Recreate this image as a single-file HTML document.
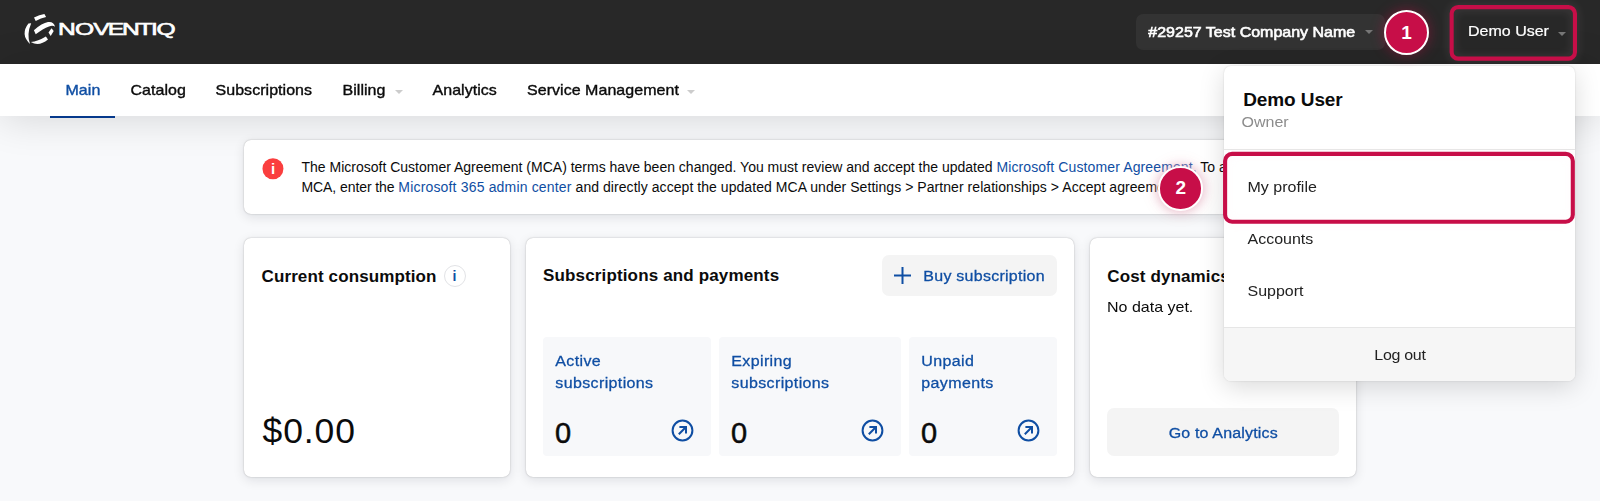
<!DOCTYPE html>
<html lang="en">
<head>
<meta charset="utf-8">
<title>Noventiq</title>
<style>
*{box-sizing:border-box;margin:0;padding:0}
html,body{width:1600px;height:501px;overflow:hidden;background:#f8f9fb;font-family:"Liberation Sans",sans-serif;color:#0b0b0b}
.abs{position:absolute;white-space:nowrap}
#hdr{position:absolute;left:0;top:0;width:1600px;height:64px;background:#282828}
#nav{position:absolute;left:0;top:64px;width:1600px;height:52px;background:#fff;box-shadow:0 3px 40px rgba(0,0,0,.14)}
.px{transform:scaleY(.95);transform-origin:0 77.7%}
.pl{transform:scaleY(.95);transform-origin:0 75%}
.pm{transform:scaleY(.93);transform-origin:0 75%}
.nv{transform:scaleY(.95);transform-origin:0 77.7%;position:absolute;top:80.1px;font-size:16px;line-height:20px;letter-spacing:.04px;color:#0b0b0b;white-space:nowrap;-webkit-text-stroke:.4px currentColor}
.caret{position:absolute;width:0;height:0;border-left:4px solid transparent;border-right:4px solid transparent;border-top:4px solid #ccc}
.card{position:absolute;background:#fff;border-radius:7px;box-shadow:0 0 1.5px rgba(0,0,0,.30),0 3px 12px rgba(10,20,40,.11)}
.h{position:absolute;font-weight:bold;font-size:17px;line-height:22px;white-space:nowrap;color:#0b0b0b}
.tile{position:absolute;top:337px;height:119px;background:#f7f8fa;border-radius:4px}
.tl{transform:scaleY(.93);transform-origin:0 0;position:absolute;left:12.3px;top:12.6px;font-size:16px;line-height:23.66px;letter-spacing:.37px;color:#0f4ea3;-webkit-text-stroke:.3px currentColor}
.tn{position:absolute;left:12px;top:79.2px;font-size:29px;line-height:34px;color:#0b0b0b;-webkit-text-stroke:.5px currentColor}
.ar{position:absolute;top:82px;width:23px;height:23px}
.blue{color:#0f4ea3}
</style>
</head>
<body>
<div id="hdr">
  <svg class="abs" style="left:0;top:0" width="64" height="64" viewBox="0 0 64 64" fill="#fff">
    <path d="M34.0 17.5 Q39.5 14.4 44.4 13.9 L46.1 17.0 Q41 17.8 35.7 21.0 Z"/>
    <path d="M28.4 23.5 Q20.0 34.4 30 43.9 Q26.4 34.4 31.2 23.2 Z"/>
    <path d="M33.9 30.2 Q42 23.2 48 22.1 Q53.7 21.3 55.1 26.8 Q53 24.9 49 26.4 Q43 28.6 35.7 34.3 Z"/>
    <path d="M51.5 28.2 L53.7 31.1 L50.7 36 L48.5 32.5 Z"/>
    <path d="M30.8 42 Q38 41.3 45.9 36.5 L48 39.5 Q39 46.8 30.8 42 Z"/>
  </svg>
  <svg class="abs" style="left:0;top:0" width="200" height="64"><text id="logo" transform="scale(1.45,1)" x="46.07 58.38 70.03 79.93 90.28 100.21 106.45 114.59" y="35.3" text-anchor="middle" font-family="Liberation Sans, sans-serif" font-size="17" fill="#fff" stroke="#fff" stroke-width=".6">NOVENTIQ</text></svg>
  <div class="abs" style="left:1136px;top:14px;width:249px;height:36px;border-radius:7px;background:#333"></div>
  <div class="abs px" id="comp" style="left:1148.3px;top:21.5px;font-size:16px;line-height:20px;letter-spacing:0px;color:#fff;-webkit-text-stroke:.65px #fff">#29257 Test Company Name</div>
  <div class="caret" style="left:1365px;top:30px;border-top-color:#777"></div>
  <div class="abs px" id="duser" style="left:1468px;top:21.2px;font-size:16px;line-height:20px;color:#fff;-webkit-text-stroke:.25px #fff">Demo User</div>
  <div class="caret" style="left:1558px;top:32px;border-top-color:#777"></div>
</div>
<div id="nav"></div>
<div class="abs" style="left:50px;top:116px;width:65px;height:2px;background:#06398c"></div>
<div class="nv blue" id="n1" style="left:65.5px">Main</div>
<div class="nv" id="n2" style="left:130.5px">Catalog</div>
<div class="nv" id="n3" style="left:215.5px">Subscriptions</div>
<div class="nv" id="n4" style="left:342.5px">Billing</div>
<div class="caret" style="left:394.5px;top:90px"></div>
<div class="nv" id="n5" style="left:432.5px">Analytics</div>
<div class="nv" id="n6" style="left:527px">Service Management</div>
<div class="caret" style="left:686.5px;top:90px"></div>

<!-- alert -->
<div class="card" style="left:244px;top:140px;width:1112px;height:74px"></div>
<div class="abs" style="left:262px;top:158px;transform:translate(.45px,.25px);width:21.3px;height:21.3px;border-radius:50%;background:#fa3e3e;color:#fff;font-weight:bold;font-size:15px;line-height:21px;text-align:center">i</div>
<div class="abs" id="a1" style="left:301.5px;top:157px;font-size:14px;line-height:20px;color:#0b0b0b">The Microsoft Customer Agreement (MCA) terms have been changed. You must review and accept the updated <span id="a1b" class="blue" style="letter-spacing:.12px">Microsoft Customer Agreement</span>. <span id="a1c">To accept the</span></div>
<div class="abs" id="a2" style="left:301.5px;top:177px;font-size:14px;line-height:20px;color:#0b0b0b"><span id="a2a" style="letter-spacing:-.08px">MCA, enter the </span><span id="a2b" class="blue" style="letter-spacing:.17px">Microsoft 365 admin center</span><span id="a2c" style="letter-spacing:.054px"> and directly accept the updated MCA under Settings &gt; Partner relationships &gt; <span id="a2d">Accept agreement.</span></span></div>

<!-- card 1 -->
<div class="card" style="left:244px;top:238px;width:266px;height:239px"></div>
<div class="h" id="h1" style="left:261.5px;top:265.5px;letter-spacing:.12px">Current consumption</div>
<div class="abs" style="left:443.5px;top:265px;width:22px;height:22px;border-radius:50%;border:1px solid #e2e3e6;color:#0f4ea3;font-weight:bold;font-size:14px;line-height:20px;text-align:center">i</div>
<div class="abs" id="amt" style="left:262.5px;top:410px;font-size:35.5px;line-height:42px;letter-spacing:.9px;color:#0b0b0b">$0.00</div>

<!-- card 2 -->
<div class="card" style="left:526px;top:238px;width:548px;height:239px"></div>
<div class="h" id="h2" style="left:543px;top:265px;letter-spacing:.15px">Subscriptions and payments</div>
<div class="abs" style="left:881.6px;top:255px;width:175.3px;height:41px;border-radius:7px;background:#f4f4f4"></div>
<svg class="abs" style="left:893.8px;top:267.1px" width="17" height="17" viewBox="0 0 17 17"><path d="M8.5 0v17M0 8.5h17" stroke="#0f4ea3" stroke-width="2" fill="none"/></svg>
<div class="abs blue pm" id="buy" style="left:923.3px;top:264.6px;font-size:16px;line-height:22px;letter-spacing:.26px;-webkit-text-stroke:.3px currentColor">Buy subscription</div>

<div class="tile" style="left:543px;width:168px"><div class="tl" id="t1">Active<br><span id="t1b">subscriptions</span></div><div class="tn">0</div>
<svg class="ar" style="right:17.45px" viewBox="0 0 23 23" fill="none" stroke="#0f4ea3" stroke-width="2"><circle cx="11.5" cy="11.5" r="9.9"/><path d="M7.8 15.2L15 8M8.4 8H15v6.6"/></svg></div>
<div class="tile" style="left:719px;width:182px"><div class="tl" id="t2"><span id="t2a">Expiring</span><br>subscriptions</div><div class="tn">0</div>
<svg class="ar" style="right:17.45px" viewBox="0 0 23 23" fill="none" stroke="#0f4ea3" stroke-width="2"><circle cx="11.5" cy="11.5" r="9.9"/><path d="M7.8 15.2L15 8M8.4 8H15v6.6"/></svg></div>
<div class="tile" style="left:909px;width:148px"><div class="tl" id="t3"><span id="t3a">Unpaid</span><br><span id="t3b">payments</span></div><div class="tn">0</div>
<svg class="ar" style="right:17.45px" viewBox="0 0 23 23" fill="none" stroke="#0f4ea3" stroke-width="2"><circle cx="11.5" cy="11.5" r="9.9"/><path d="M7.8 15.2L15 8M8.4 8H15v6.6"/></svg></div>

<!-- card 3 -->
<div class="card" style="left:1090px;top:238px;width:266px;height:239px"></div>
<div class="h" id="h3" style="left:1107.3px;top:265.5px;letter-spacing:.12px">Cost dynamics</div>
<div class="abs pl" id="nd" style="left:1107px;top:296px;font-size:16px;line-height:22px">No data yet.</div>
<div class="abs" style="left:1107px;top:408.4px;width:232px;height:48px;border-radius:7px;background:#f4f4f4"></div>
<div class="abs blue pm" id="goa" style="left:1168.7px;top:422px;font-size:16px;line-height:22px;letter-spacing:.16px;-webkit-text-stroke:.3px currentColor">Go to Analytics</div>

<!-- dropdown -->
<div class="abs" id="dd" style="left:1224px;top:66px;width:351px;height:315px;background:#fff;border-radius:7px;box-shadow:0 6px 26px rgba(0,0,0,.15),0 0 2px rgba(0,0,0,.14);overflow:hidden">
  <div class="abs" style="left:0;top:83px;width:352px;height:1px;background:#e6e6e6"></div>
  <div class="abs" style="left:0;top:261px;width:352px;height:54px;background:#f6f6f6;border-top:1px solid #e6e6e6"></div>
</div>
<div class="abs" id="dt" style="left:1243.2px;top:87.7px;font-size:19px;line-height:24px;letter-spacing:-.1px;font-weight:bold;color:#0b0b0b">Demo User</div>
<div class="abs px" id="ow" style="left:1241.5px;top:112.4px;font-size:16px;line-height:20px;color:#8c8c8c">Owner</div>
<div class="abs pl" id="m1" style="left:1247.5px;top:176px;font-size:16px;line-height:22px;color:#222">My profile</div>
<div class="abs pl" id="m2" style="left:1247.5px;top:228px;font-size:16px;line-height:22px;color:#222">Accounts</div>
<div class="abs pl" id="m3" style="left:1247.5px;top:280px;font-size:16px;line-height:22px;color:#222">Support</div>
<div class="abs pl" id="lo" style="left:1374.3px;top:344px;font-size:16px;line-height:22px;letter-spacing:-.3px;color:#222">Log out</div>

<!-- annotations -->
<svg class="abs" style="left:0;top:0;filter:drop-shadow(0 0 5px rgba(255,225,235,.16))" width="1600" height="240" fill="none" stroke="#c70e48" stroke-width="4.1">
  <rect x="1451.65" y="7.1" width="123.3" height="51.55" rx="6.5"/>
  <rect x="1225.1" y="153.9" width="347.7" height="67.8" rx="7"/>
</svg>
<div class="abs" id="b1" style="left:1384px;top:10.4px;width:45px;height:45px;border-radius:50%;background:#c70e48;border:2px solid #fff;color:#fff;font-weight:bold;font-size:19px;line-height:41px;text-align:center;box-shadow:0 0 14px rgba(199,14,72,.45)">1</div>
<div class="abs" id="b2" style="left:1158.4px;top:166.2px;width:44.6px;height:44.6px;border-radius:50%;background:#c70e48;border:2.4px solid #fff;color:#fff;font-weight:bold;font-size:19px;line-height:39.5px;text-align:center;box-shadow:0 0 9px 1.5px rgba(228,180,196,.75),0 0 18px 4px rgba(199,14,72,.06)">2</div>
</body>
</html>
